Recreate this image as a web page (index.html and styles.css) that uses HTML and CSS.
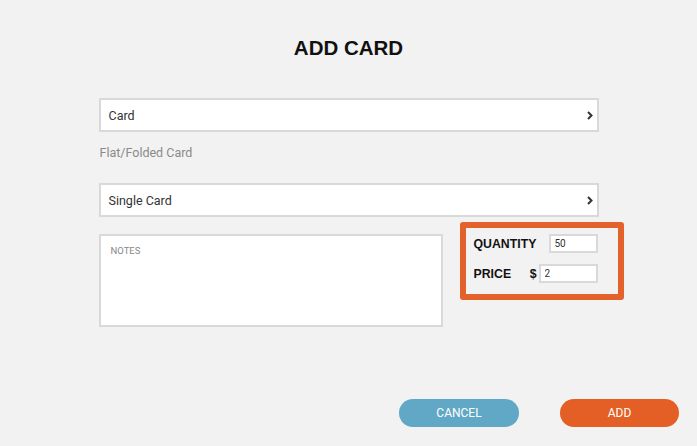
FILE: index.html
```html
<!DOCTYPE html>
<html>
<head>
<meta charset="utf-8">
<link rel="stylesheet" href="styles.css">
</head>
<body>
<div class="modal">
  <h1 class="title">ADD CARD</h1>
  <div class="form">
    <div class="select">
      <span>Card</span>
      <svg class="chev" width="6" height="9" viewBox="0 0 6 9"><polyline points="1,1 4.5,4.5 1,8" fill="none" stroke="#333" stroke-width="2"/></svg>
    </div>
    <div class="hint">Flat/Folded Card</div>
    <div class="select select-2">
      <span>Single Card</span>
      <svg class="chev" width="6" height="9" viewBox="0 0 6 9"><polyline points="1,1 4.5,4.5 1,8" fill="none" stroke="#333" stroke-width="2"/></svg>
    </div>
    <div class="bottom-row">
      <textarea class="notes" placeholder="NOTES"></textarea>
      <div class="qty-box">
        <div class="qty-row">
          <span class="lbl">QUANTITY</span>
          <input class="num qty" value="50">
        </div>
        <div class="qty-row row-2">
          <span class="lbl">PRICE</span>
          <span class="dollar">$</span>
          <input class="num price" value="2">
        </div>
      </div>
    </div>
  </div>
  <div class="actions">
    <button class="btn cancel">CANCEL</button>
    <button class="btn add">ADD</button>
  </div>
</div>
</body>
</html>
```
FILE: styles.css
```css
html, body {
  margin: 0;
  padding: 0;
  background: #f2f2f2;
  font-family: Roboto, "Liberation Sans", sans-serif;
  color: #333;
}
.modal {
  width: 697px;
  height: 446px;
  padding-top: 36px;
  box-sizing: border-box;
}
.title {
  margin: 0;
  font-family: "Liberation Sans", Arial, sans-serif;
  font-weight: bold;
  font-size: 20.5px;
  line-height: 24px;
  text-align: center;
  color: #111;
}
.form {
  width: 500px;
  margin: 38px auto 0;
}
.select {
  height: 34px;
  box-sizing: border-box;
  border: 2px solid #d9d9d9;
  background: #fff;
  display: flex;
  align-items: center;
  justify-content: space-between;
  padding: 0 4px 0 8px;
  font-size: 12.5px;
  color: #333;
}
.select-2 {
  margin-top: 22px;
}
.hint {
  margin-top: 13px;
  line-height: 16px;
  font-size: 12.5px;
  color: #8a8a8a;
  padding-left: 1px;
}
.bottom-row {
  display: flex;
  align-items: flex-start;
  gap: 17px;
  margin-top: 5px;
}
.notes {
  width: 344px;
  height: 93px;
  flex-shrink: 0;
  box-sizing: border-box;
  margin: 12px 0 0;
  border: 2px solid #d9d9d9;
  background: #fff;
  resize: none;
  padding: 9px 10px;
  font-family: Roboto, sans-serif;
  font-size: 9.5px;
  outline: none;
}
.notes::placeholder {
  color: #888;
}
.qty-box {
  width: 164px;
  height: 78px;
  box-sizing: border-box;
  flex-shrink: 0;
  border: 6px solid #e3612a;
  border-radius: 3px;
  padding: 6px 20px 0 8px;
}
.qty-row {
  display: flex;
  align-items: center;
  height: 19px;
}
.row-2 {
  margin-top: 11px;
}
.lbl {
  font-family: "Liberation Sans", Arial, sans-serif;
  font-weight: bold;
  font-size: 12.3px;
  color: #111;
}
.dollar {
  margin-left: auto;
  font-family: "Liberation Sans", Arial, sans-serif;
  font-weight: bold;
  font-size: 12.3px;
  color: #111;
  margin-right: 2px;
}
.num {
  height: 19px;
  box-sizing: border-box;
  border: 2px solid #d9d9d9;
  background: #fff;
  padding: 0 4px;
  font-family: Roboto, sans-serif;
  font-size: 10px;
  color: #333;
  outline: none;
}
.qty {
  width: 49px;
  margin-left: auto;
}
.price {
  width: 59px;
}
.actions {
  display: flex;
  justify-content: flex-end;
  gap: 41px;
  padding-right: 18px;
  margin-top: 72px;
}
.btn {
  width: 120px;
  height: 28px;
  border: none;
  border-radius: 14px;
  color: #fff;
  font-family: Roboto, sans-serif;
  font-size: 12px;
  padding: 0;
}
.cancel {
  background: #60a8c5;
}
.add {
  width: 119px;
  background: #e35f25;
}
```
